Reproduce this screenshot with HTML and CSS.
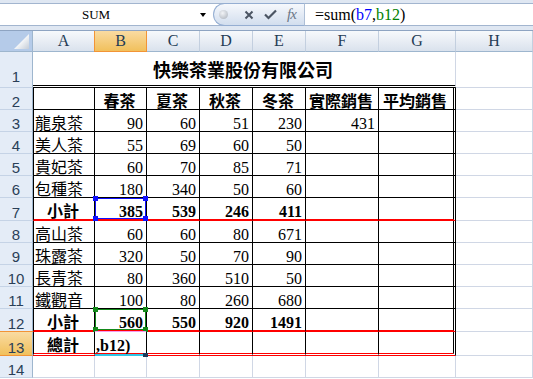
FILE: index.html
```html
<!DOCTYPE html>
<html lang="zh-Hant">
<head>
  <meta charset="UTF-8" />
  <title>快樂茶業股份有限公司</title>
  <link rel="stylesheet" href="styles.css">
</head>
<body>
  <div class="formula-bar">
    <div class="fb-inner">
      <div class="name-box"><span class="name">SUM</span><span class="drop"></span></div>
      <div class="fx-tools">
        <span class="dot"></span>
        <svg class="ico" width="10" height="10" viewBox="0 0 10 10"><path d="M1.5 1.5L8.5 8.5M8.5 1.5L1.5 8.5" stroke="#4b5563" stroke-width="2"/></svg>
        <svg class="ico" width="13" height="11" viewBox="0 0 13 11"><path d="M1 5.5L4.5 9L12 1.5" stroke="#4b5563" stroke-width="2.2" fill="none"/></svg>
        <span class="fx">fx</span>
      </div>
      <div class="formula">=sum(<span class="ref-b">b7</span>,<span class="ref-g">b12</span>)</div>
    </div>
  </div>

  <div class="sheet">
    <div class="row hdr">
      <div class="corner"></div>
      <div class="ch">A</div><div class="ch on">B</div><div class="ch">C</div><div class="ch">D</div>
      <div class="ch">E</div><div class="ch">F</div><div class="ch">G</div><div class="ch">H</div>
    </div>

    <div class="row tall">
      <div class="rh">1</div>
      <div class="c title">快樂茶業股份有限公司</div>
      <div class="c"></div>
    </div>

    <div class="row">
      <div class="rh">2</div>
      <div class="c t tl"></div>
      <div class="c t m b">春茶</div><div class="c t m b">夏茶</div><div class="c t m b">秋茶</div><div class="c t m b">冬茶</div>
      <div class="c t m b">實際銷售</div><div class="c t tr m b">平均銷售</div>
      <div class="c"></div>
    </div>

    <div class="row">
      <div class="rh">3</div>
      <div class="c t tl">龍泉茶</div>
      <div class="c t n">90</div><div class="c t n">60</div><div class="c t n">51</div><div class="c t n">230</div>
      <div class="c t n">431</div><div class="c t tr"></div>
      <div class="c"></div>
    </div>

    <div class="row">
      <div class="rh">4</div>
      <div class="c t tl">美人茶</div>
      <div class="c t n">55</div><div class="c t n">69</div><div class="c t n">60</div><div class="c t n">50</div>
      <div class="c t"></div><div class="c t tr"></div>
      <div class="c"></div>
    </div>

    <div class="row">
      <div class="rh">5</div>
      <div class="c t tl">貴妃茶</div>
      <div class="c t n">60</div><div class="c t n">70</div><div class="c t n">85</div><div class="c t n">71</div>
      <div class="c t"></div><div class="c t tr"></div>
      <div class="c"></div>
    </div>

    <div class="row">
      <div class="rh">6</div>
      <div class="c t tl">包種茶</div>
      <div class="c t n">180</div><div class="c t n">340</div><div class="c t n">50</div><div class="c t n">60</div>
      <div class="c t"></div><div class="c t tr"></div>
      <div class="c"></div>
    </div>

    <div class="row thick">
      <div class="rh">7</div>
      <div class="c t tl red m b">小計</div>
      <div class="c t red n b ref-cell">385<span class="box blue"><i class="tlc"></i><i class="trc"></i><i class="blc"></i><i class="brc"></i></span></div>
      <div class="c t red n b">539</div><div class="c t red n b">246</div><div class="c t red n b">411</div>
      <div class="c t red"></div><div class="c t tr red"></div>
      <div class="c"></div>
    </div>

    <div class="row">
      <div class="rh">8</div>
      <div class="c t tl">高山茶</div>
      <div class="c t n">60</div><div class="c t n">60</div><div class="c t n">80</div><div class="c t n">671</div>
      <div class="c t"></div><div class="c t tr"></div>
      <div class="c"></div>
    </div>

    <div class="row">
      <div class="rh">9</div>
      <div class="c t tl">珠露茶</div>
      <div class="c t n">320</div><div class="c t n">50</div><div class="c t n">70</div><div class="c t n">90</div>
      <div class="c t"></div><div class="c t tr"></div>
      <div class="c"></div>
    </div>

    <div class="row">
      <div class="rh">10</div>
      <div class="c t tl">長青茶</div>
      <div class="c t n">80</div><div class="c t n">360</div><div class="c t n">510</div><div class="c t n">50</div>
      <div class="c t"></div><div class="c t tr"></div>
      <div class="c"></div>
    </div>

    <div class="row">
      <div class="rh">11</div>
      <div class="c t tl">鐵觀音</div>
      <div class="c t n">100</div><div class="c t n">80</div><div class="c t n">260</div><div class="c t n">680</div>
      <div class="c t"></div><div class="c t tr"></div>
      <div class="c"></div>
    </div>

    <div class="row thick">
      <div class="rh">12</div>
      <div class="c t tl red m b">小計</div>
      <div class="c t red n b ref-cell">560<span class="box green"><i class="tlc"></i><i class="trc"></i><i class="blc"></i><i class="brc"></i></span></div>
      <div class="c t red n b">550</div><div class="c t red n b">920</div><div class="c t red n b">1491</div>
      <div class="c t red"></div><div class="c t tr red"></div>
      <div class="c"></div>
    </div>

    <div class="row double">
      <div class="rh on">13</div>
      <div class="c t tl red2 m b">總計</div>
      <div class="c t red2 b ref-cell">,b12)<span class="box edit"><i class="handle"></i></span></div>
      <div class="c t red2"></div><div class="c t red2"></div><div class="c t red2"></div>
      <div class="c t red2"></div><div class="c t tr red2"></div>
      <div class="c"></div>
    </div>

    <div class="row">
      <div class="rh">14</div>
      <div class="c"></div><div class="c"></div><div class="c"></div><div class="c"></div>
      <div class="c"></div><div class="c"></div><div class="c"></div><div class="c"></div>
    </div>
  </div>
</body>
</html>
```

FILE: styles.css
```css
body {
  margin: 0;
  width: 533px;
  height: 379px;
  overflow: hidden;
  background: #fff;
  color: #000;
  font-family: "Liberation Serif", "Noto Sans CJK TC", serif;
}

/* formula bar */
.formula-bar {
  height: 31px;
  box-sizing: border-box;
  padding: 3px 0 3px;
  background: #dfe7f2;
  border-bottom: 1px solid #8ea4c2;
}
.fb-inner {
  height: 23px;
  box-sizing: border-box;
  display: flex;
  background: #fff;
  border-top: 1px solid #a2b5cf;
  border-bottom: 1px solid #a2b5cf;
}
.name-box {
  width: 210px;
  display: flex;
  align-items: center;
}
.name {
  width: 192px;
  text-align: center;
  font-size: 13px;
}
.drop {
  width: 0;
  height: 0;
  margin-left: 8px;
  border-left: 3.5px solid transparent;
  border-right: 3.5px solid transparent;
  border-top: 4px solid #000;
}
.fx-tools {
  width: 92px;
  margin-left: 3px;
  margin-top: -1px;
  margin-bottom: -1px;
  box-sizing: border-box;
  display: flex;
  align-items: center;
  padding-left: 5px;
  border: 1px solid #95aed2;
  border-right-color: #aebfd6;
  border-radius: 12px 0 0 12px;
  background: linear-gradient(#f6f8fc, #d2deee);
}
.dot {
  width: 9px;
  height: 9px;
  border-radius: 50%;
  background: radial-gradient(circle at 40% 35%, #f2f4f7, #a7aeb8);
  margin-right: 16px;
}
.ico { margin-right: 10px; }
.fx {
  font-style: italic;
  font-size: 15px;
  color: #6b7787;
  letter-spacing: -1px;
}
.formula {
  flex: 1;
  padding-left: 10px;
  font-size: 16px;
  line-height: 21px;
}
.ref-b { color: #0000ff; }
.ref-g { color: #008000; }

/* sheet grid */
.row {
  display: grid;
  grid-template-columns: 33px 62px 52px 53px 53px 53px 73px 77px 77px;
  height: 22px;
}
.row.hdr { height: 21px; }
.row.tall { height: 36px; }
.row.thick { height: 23px; }
.row.double { height: 24px; }

.corner {
  display: flex;
  background: #b5cbe9;
  border-right: 1px solid #9eb6ce;
  border-bottom: 1px solid #9eb6ce;
}
.corner::after {
  content: "";
  width: 15px;
  height: 15px;
  margin: auto 3px 2px auto;
  background: linear-gradient(135deg, #ffffff 40%, #c4ccd7);
  clip-path: polygon(100% 0, 100% 100%, 0 100%);
}
.ch {
  box-sizing: border-box;
  display: flex;
  align-items: center;
  justify-content: center;
  font-size: 16px;
  color: #243c55;
  background: linear-gradient(#f7f9fc, #dae2ed);
  border-right: 1px solid #c3cfdf;
  border-bottom: 1px solid #9eb6ce;
}
.ch.on {
  background: linear-gradient(#f9dba2, #f1c05c);
  border-right-color: #f29436;
  border-bottom-color: #f29436;
  box-shadow: -1px 0 0 #f29436;
}
.rh {
  box-sizing: border-box;
  display: flex;
  align-items: flex-end;
  justify-content: center;
  font-family: "Liberation Sans", sans-serif;
  font-size: 15px;
  line-height: 14px;
  color: #2a3f58;
  background: #e4ecf7;
  border-right: 1px solid #9eb6ce;
  border-bottom: 1px solid #c5d3e6;
}
.tall .rh { padding-bottom: 3px; }
.rh.on {
  background: linear-gradient(#f9dba2, #f1c05c);
  border-bottom-color: #f29436;
  box-shadow: 0 -1px 0 #f29436;
}

.c {
  box-sizing: border-box;
  display: flex;
  align-items: flex-end;
  padding: 0 3px 0 1px;
  font-size: 16px;
  line-height: 14px;
  white-space: nowrap;
  border-right: 1px solid #d0d7e5;
  border-bottom: 1px solid #d0d7e5;
}
.c.t {
  border-right-color: #000;
  border-bottom-color: #000;
}
.c.tl { border-left: 1px solid #000; }
.c.tr { border-right: 3px double #000; }
.c.n { justify-content: flex-end; }
.c.m { justify-content: center; }
.c.b { font-weight: bold; }
.c.red { border-bottom: 2px solid #ff0000; }
.c.red2 { border-bottom: 3px double #ff0000; }

.c.title {
  grid-column: span 7;
  align-items: center;
  justify-content: center;
  font-family: "Noto Sans CJK TC", sans-serif;
  font-weight: bold;
  font-size: 18px;
  line-height: 20px;
  border-bottom: 3px double #000;
}

/* reference boxes drawn over the cells */
.ref-cell { position: relative; }
.box {
  position: absolute;
  left: 0;
  top: 0;
  right: 0;
  bottom: 0;
  z-index: 2;
  border: 1px solid;
}
.box.blue { border-color: #1010ff; }
.box.green { border-color: #13891a; }
.box i {
  position: absolute;
  width: 5px;
  height: 5px;
  background: currentColor;
}
.box.blue i { color: #1010ff; }
.box.green i { color: #13891a; }
.tlc { left: -3px; top: -3px; }
.trc { right: -3px; top: -3px; }
.blc { left: -3px; bottom: -3px; }
.brc { right: -3px; bottom: -3px; }
.box.edit {
  border: none;
  top: -1px;
  bottom: -3px;
  border-top: 1px solid #f59af0;
  border-bottom: 2px solid #2fc6e6;
}
.box.edit .handle {
  right: -2px;
  bottom: -3px;
  width: 5px;
  height: 4px;
  background: #1f3a5a;
}
```
